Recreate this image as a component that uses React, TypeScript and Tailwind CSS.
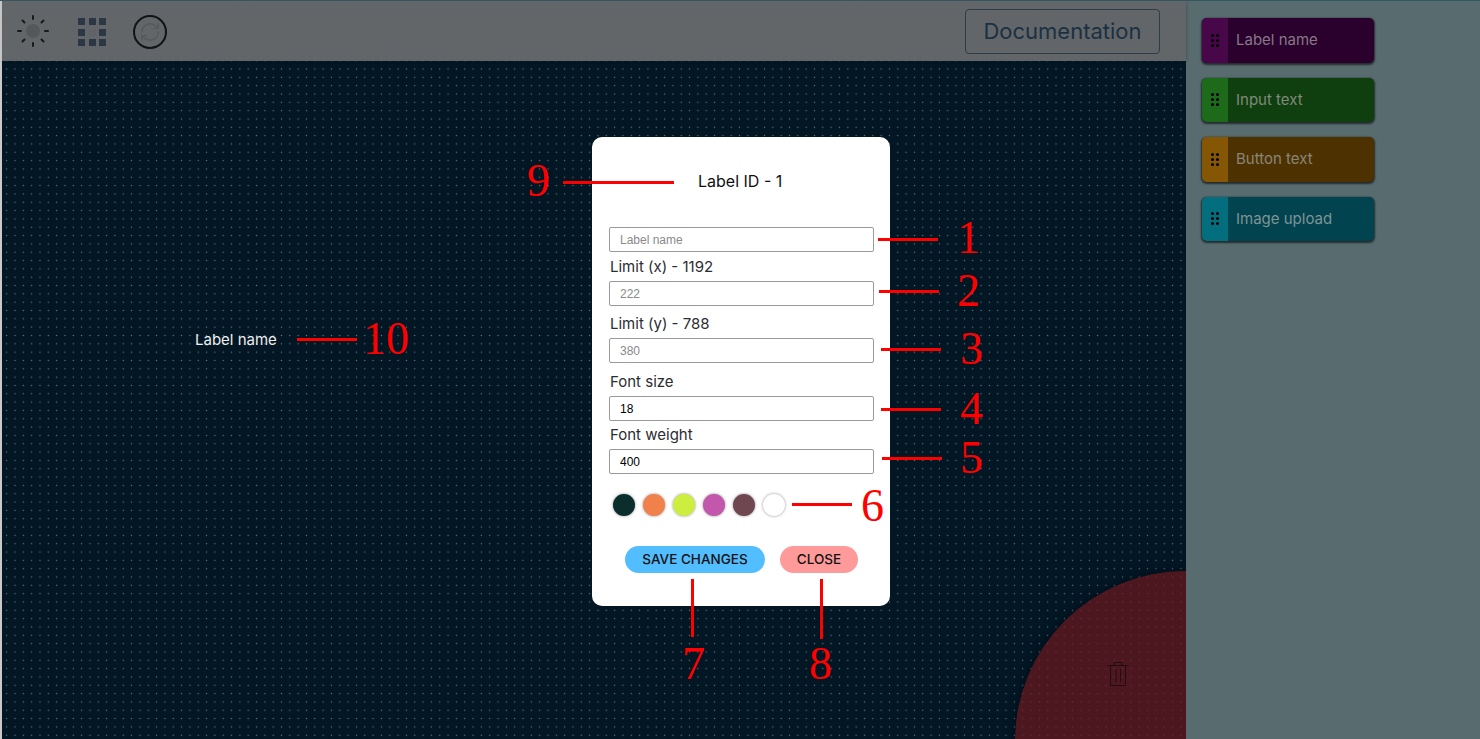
import React from 'react';
import { RefreshCw } from 'lucide-react';

const TOOLS = [
  { label: 'Label name', handle: 'bg-[#470749]', body: 'bg-[#2a002d]', text: 'text-[#857887]' },
  { label: 'Input text', handle: 'bg-[#1c6a1a]', body: 'bg-[#0f3f0e]', text: 'text-[#80897b]' },
  { label: 'Button text', handle: 'bg-[#855704]', body: 'bg-[#4d3200]', text: 'text-[#8a857b]' },
  { label: 'Image upload', handle: 'bg-[#036f7e]', body: 'bg-[#01434e]', text: 'text-[#7f9496]' },
];

const SWATCHES = ['bg-[#0b2e2c]', 'bg-[#f0814a]', 'bg-[#cdee3f]', 'bg-[#c257ab]', 'bg-[#6f4750]', 'bg-white'];

const CALLOUTS = [
  { n: '9', line: 'left-[563px] top-[180px] w-[111px] h-[3px]', num: 'left-[527px] top-[155px]' },
  { n: '1', line: 'left-[878px] top-[237px] w-[60px] h-[3px]', num: 'left-[957px] top-[212px]' },
  { n: '2', line: 'left-[879px] top-[289px] w-[60px] h-[3px]', num: 'left-[957px] top-[265px]' },
  { n: '3', line: 'left-[881px] top-[347px] w-[60px] h-[3px]', num: 'left-[960px] top-[323px]' },
  { n: '4', line: 'left-[881px] top-[407px] w-[60px] h-[3px]', num: 'left-[960px] top-[383px]' },
  { n: '5', line: 'left-[882px] top-[456px] w-[60px] h-[3px]', num: 'left-[960px] top-[432px]' },
  { n: '6', line: 'left-[792px] top-[502px] w-[60px] h-[3px]', num: 'left-[861px] top-[480px]' },
  { n: '10', line: 'left-[297px] top-[337px] w-[60px] h-[3px]', num: 'left-[363px] top-[313px]' },
  { n: '7', line: 'left-[691px] top-[578px] w-[3px] h-[58px]', num: 'left-[682px] top-[638px]' },
  { n: '8', line: 'left-[820px] top-[578px] w-[3px] h-[60px]', num: 'left-[809px] top-[638px]' },
];

function Field({ label, value, placeholder }: { label?: string; value?: string; placeholder: string }) {
  return (
    <div className="flex flex-col">
      {label && <span className="pl-[1px] text-[15px] leading-[20px] text-[#2c2c33]">{label}</span>}
      <input
        readOnly
        value={value ?? ''}
        placeholder={placeholder}
        className="mt-[4px] h-[25px] w-[265px] rounded-[2px] border border-[#9a9a9a] bg-white pl-[10px] font-['Liberation_Sans',sans-serif] text-[12px] text-black placeholder:text-[#8a8a8a]"
      />
    </div>
  );
}

export default function App() {
  return (
    <div className="relative flex h-screen w-full overflow-hidden border-t border-[#33575c] font-['Inter',sans-serif]">
      {/* Canvas side */}
      <div className="relative flex w-[1186px] flex-col border-l-2 border-[#c9c9c9] bg-[#021624] bg-[radial-gradient(circle,#6a7781_0.5px,transparent_1px)] bg-[size:8.33px_8.33px] bg-[position:0.5px_-2.8px]">
        <div className="flex h-[60px] items-center justify-between bg-[#676a6e]/95 pl-[13px] pr-[26px] shadow-[1px_0_3px_rgba(0,0,0,0.2)]">
          <div className="flex items-center">
            <svg viewBox="0 0 36 36" className="h-9 w-9">
              <circle cx="18" cy="18" r="7" fill="#55575b" />
              <g stroke="#17191c" strokeWidth="2" strokeLinecap="round">
                <path d="M18 3v3M18 30v3M3 18h3M30 18h3M7.5 7.5l2 2M26.5 26.5l2 2M7.5 28.5l2-2M26.5 9.5l2-2" />
              </g>
            </svg>
            <div className="ml-[27px] mt-[2px] grid grid-cols-3 gap-[3.5px]">
              {[0, 1, 2, 3, 4, 5, 6, 7, 8].map((i) => (
                <span key={i} className={`h-[7px] w-[7px] ${i === 4 ? 'bg-[#5f6266]' : 'bg-[#2b3744]'}`} />
              ))}
            </div>
            <div className="ml-[27px] mt-[2px] flex h-[34px] w-[34px] items-center justify-center rounded-full border-2 border-[#111315]">
              <RefreshCw size={22} strokeWidth={1.5} className="text-[#55585c]" />
            </div>
          </div>
          <div className="flex h-[45px] w-[195px] items-center justify-center rounded-[4px] border border-[#2d3c48] text-[22px] text-[#1b3042]">
            Documentation
          </div>
        </div>
        <div className="relative flex-1 overflow-hidden">
          <span className="absolute left-[193px] top-[269px] text-[15px] leading-5 text-[#eeeeee]">Label name</span>
          <div className="absolute left-[1013px] top-[510px] h-[340px] w-[340px] rounded-full bg-[#6c181c]/70 shadow-[0_0_10px_rgba(0,0,0,0.4)]" />
          <svg viewBox="0 0 24 26" fill="none" stroke="#260b10" strokeWidth="1" className="absolute left-[1104px] top-[600px] h-[26px] w-[24px]">
            <path d="M1.5 4.5h21M8 4.5V1.5h8v3M4.5 4.5v20h15v-20M10 8v13M14.5 8v13" />
          </svg>
        </div>
      </div>

      {/* Right panel */}
      <div className="flex flex-1 flex-col gap-[15px] bg-[#586c70] pl-[16px] pt-[17px] shadow-[-2px_0_4px_rgba(0,0,0,0.3)]">
        {TOOLS.map((t) => (
          <div key={t.label} className={`flex h-[44.5px] w-[172px] overflow-hidden rounded-[5px] ${t.body} shadow-[0_1px_2px_1px_rgba(0,0,0,0.6)]`}>
            <div className={`flex w-[26px] items-center justify-center ${t.handle}`}>
              <div className="grid grid-cols-2 gap-[2px]">
                {[0, 1, 2, 3, 4, 5].map((i) => (
                  <span key={i} className="h-[3px] w-[3px] rounded-full bg-black" />
                ))}
              </div>
            </div>
            <span className={`ml-[8px] self-center text-[15px] ${t.text}`}>{t.label}</span>
          </div>
        ))}
      </div>

      {/* Modal */}
      <div className="absolute left-[592px] top-[136px] flex h-[469px] w-[298px] flex-col rounded-[10px] bg-white px-[17px]">
        <div className="mt-[34px] pl-[89px] text-[16px] leading-5 text-[#101010]">Label ID - 1</div>
        <div className="mt-[32px] flex flex-col">
          <Field placeholder="Label name" />
          <div className="mt-[5px]"><Field label="Limit (x) - 1192" placeholder="222" /></div>
          <div className="mt-[8px]"><Field label="Limit (y) - 788" placeholder="380" /></div>
          <div className="mt-[9px]"><Field label="Font size" value="18" placeholder="" /></div>
          <div className="mt-[4px]"><Field label="Font weight" value="400" placeholder="" /></div>
        </div>
        <div className="mt-[20px] flex gap-[8px] pl-[4px]">
          {SWATCHES.map((c) => (
            <span key={c} className={`h-[22px] w-[22px] rounded-full ${c} shadow-[0_0_3px_rgba(0,0,0,0.45)]`} />
          ))}
        </div>
        <div className="mt-[30px] flex gap-[15px] pl-[16px]">
          <span className="flex h-[27px] w-[140px] items-center justify-center rounded-full bg-[#52bdff] text-[13.5px] font-medium text-[#111]">SAVE CHANGES</span>
          <span className="flex h-[27px] w-[78px] items-center justify-center rounded-full bg-[#ff9a9a] text-[13.5px] font-medium text-[#111]">CLOSE</span>
        </div>
      </div>

      {/* Red annotations */}
      {CALLOUTS.map((c) => (
        <React.Fragment key={c.n}>
          <span className={`absolute bg-[#ff0000] ${c.line}`} />
          <span className={`absolute font-['Liberation_Serif',serif] text-[46px] leading-[50px] text-[#ff0000] ${c.num}`}>{c.n}</span>
        </React.Fragment>
      ))}
    </div>
  );
}
